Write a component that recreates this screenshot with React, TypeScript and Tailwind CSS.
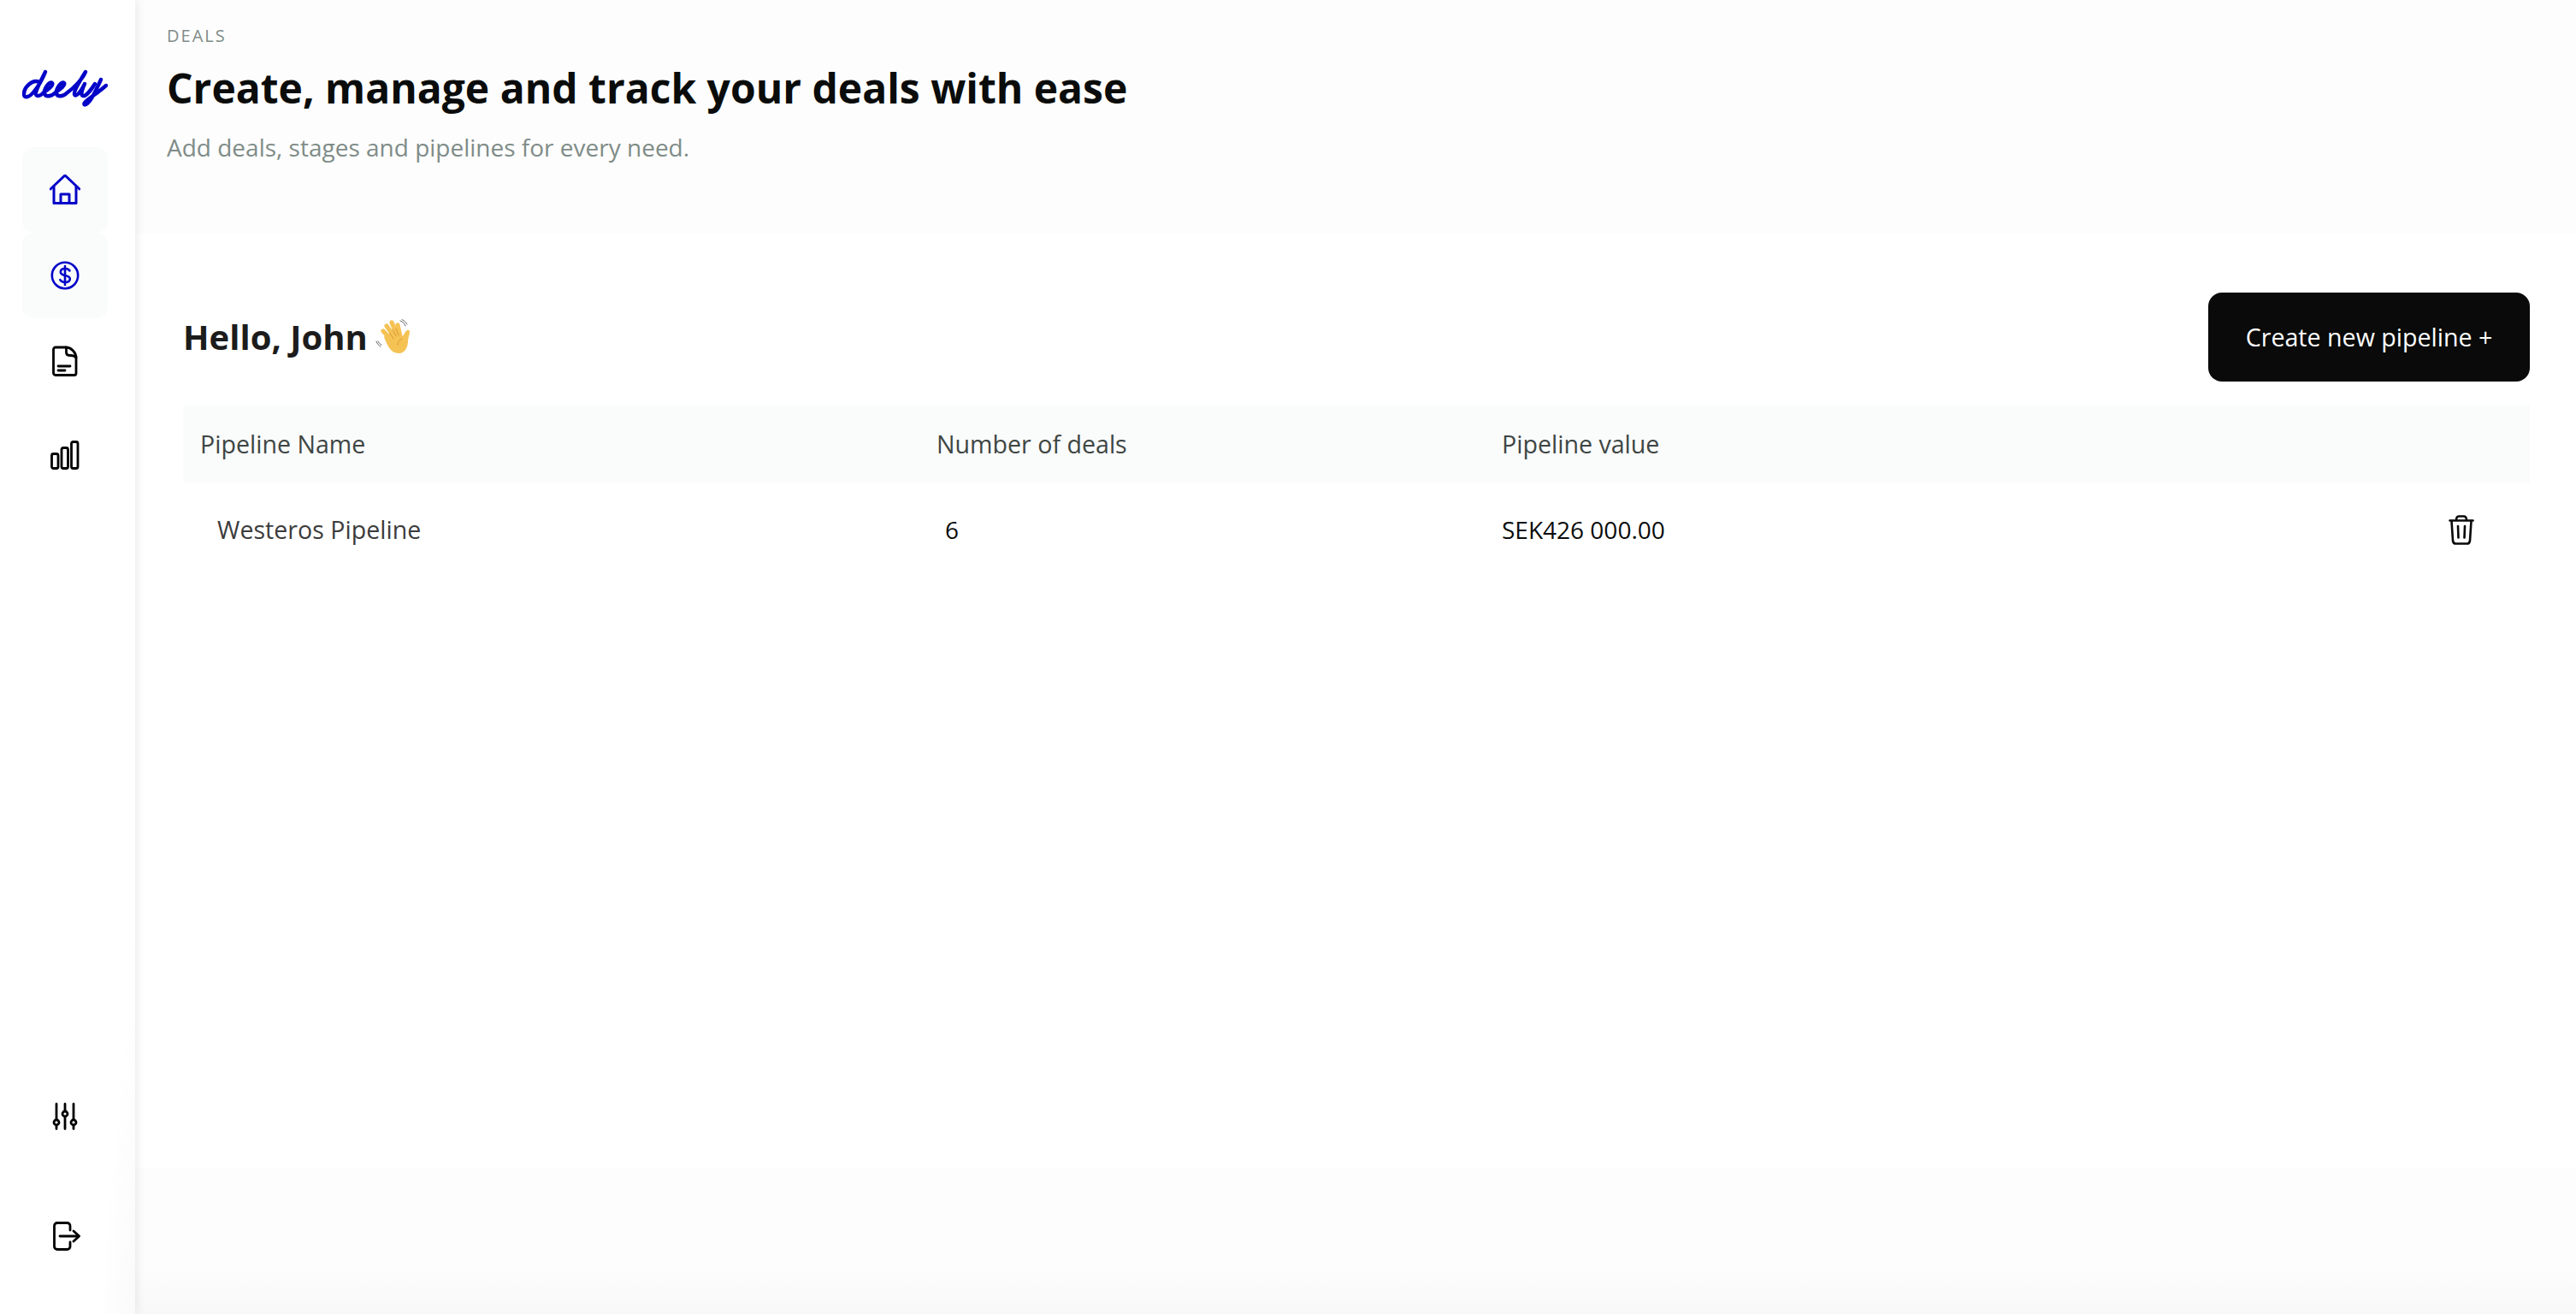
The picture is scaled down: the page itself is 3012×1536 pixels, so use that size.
const BLUE = "#0404c8";

function Logo() {
  return (
    <svg width="100" height="46" viewBox="26 80 100 46" fill="none" stroke={BLUE} strokeWidth="4.400" strokeLinecap="round" strokeLinejoin="round">
      <path d="M46 96C38 92 28 102 28 110C28 116 35 113 39 108C44 102 50 92 53 84C49 92 43 103 42 108C41 114 47 113 51 108C56 105 63 100 61 97C58 94 51 104 52 109C53 114 60 113 65 108C69 105 77 100 75 97C72 94 65 104 66 109C67 114 74 113 79 108C86 103 97 92 100 84C95 92 86 106 87 110C88 114 93 110 99 98C96 104 94 111 97 112C100 113 106 106 111 98" />
      <path d="M118 93C113 104 108 115 104 119C100 124 97 123 99 120C102 116 112 110 118 105L124 100" />
    </svg>
  );
}

function HomeIcon() {
  return (
    <svg width="36" height="36" viewBox="0 0 36 36" fill="none" stroke={BLUE} strokeWidth="3" strokeLinecap="round" strokeLinejoin="round">
      <path d="M1 17L18 1L35 17" />
      <path d="M5 14V33.500H31V14" />
      <path d="M13 33.500V23H23V33.500" />
    </svg>
  );
}

function DollarIcon() {
  return (
    <svg width="34" height="34" viewBox="0 0 34 34" fill="none" stroke={BLUE} strokeWidth="2.600" strokeLinecap="round" strokeLinejoin="round">
      <circle cx="17" cy="17" r="15.200" />
      <path d="M22.500 11.500C21.500 9.800 19.500 9 17 9C13.800 9 11.800 10.600 11.800 13C11.800 18.500 22.800 15.500 22.800 21C22.800 23.500 20.500 25 17 25C14.300 25 12.300 24 11.300 22.200" />
      <path d="M17 6V28" />
    </svg>
  );
}

function FileIcon() {
  return (
    <svg width="30" height="36" viewBox="0 0 30 36" fill="none" stroke="#000" strokeWidth="2.800" strokeLinecap="round" strokeLinejoin="round">
      <path d="M4 2H16C22 2 28 8 28 14V32C28 33.500 27 34.500 26 34.500H4C2.500 34.500 1.500 33.500 1.500 32V4.500C1.500 3 2.500 2 4 2Z" />
      <path d="M16 2C17 4 16.500 6 16.500 8C16.500 10.500 18 11.500 20.500 11.500C23 11.500 25.500 11 28 14" />
      <path d="M7 24H21" />
      <path d="M7 29H15" />
    </svg>
  );
}

function BarsIcon() {
  return (
    <svg width="34" height="34" viewBox="0 0 34 34" fill="none" stroke="#000" strokeWidth="2.800">
      <rect x="1.500" y="15.500" width="7.500" height="17" rx="2" />
      <rect x="13" y="8.500" width="7.500" height="24" rx="2" />
      <rect x="24.500" y="1.500" width="7.500" height="31" rx="2" />
    </svg>
  );
}

function SlidersIcon() {
  return (
    <svg width="30" height="32" viewBox="0 0 30 32" fill="none" stroke="#000" strokeWidth="2.800" strokeLinecap="round">
      <path d="M5 1.500V20M5 26V30.500" />
      <path d="M15 1.500V10M15 16V30.500" />
      <path d="M25 1.500V20M25 26V30.500" />
      <circle cx="5" cy="23" r="3" fill="#fff" />
      <circle cx="15" cy="13" r="3" fill="#fff" />
      <circle cx="25" cy="23" r="3" fill="#fff" />
    </svg>
  );
}

function LogoutIcon() {
  return (
    <svg width="32" height="34" viewBox="0 0 32 34" fill="none" stroke="#000" strokeWidth="2.800" strokeLinecap="round" strokeLinejoin="round" className="ml-[3px]">
      <path d="M20 10V5C20 3 18.500 1.500 16.500 1.500H5C3 1.500 1.500 3 1.500 5V29C1.500 31 3 32.500 5 32.500H16.500C18.500 32.500 20 31 20 29V24" />
      <path d="M8 17H30" />
      <path d="M24 11L30.500 17L24 23" />
    </svg>
  );
}

function TrashIcon() {
  return (
    <svg width="30" height="35" viewBox="0 0 30 35" fill="none" stroke="#0a0a0a" strokeWidth="2.600" strokeLinecap="round" strokeLinejoin="round">
      <path d="M1.500 6.500H28.500" />
      <path d="M9 6C9 2.500 10.500 1.500 12.500 1.500H17.500C19.500 1.500 21 2.500 21 6" />
      <path d="M3.500 7L5 30C5.200 32 6.500 33.500 8.500 33.500H21.500C23.500 33.500 24.800 32 25 30L26.500 7" />
      <path d="M11 13L11.500 26.500" />
      <path d="M19 13L18.500 26.500" />
    </svg>
  );
}

function WaveEmoji() {
  return (
    <svg width="42" height="42" viewBox="0 0 42 42" fill="none">
      <g stroke="#f5c254" strokeWidth="5.200" strokeLinecap="round">
        <path d="M20 26L9 14" />
        <path d="M23 22L13 8" />
        <path d="M26 20L19 4" />
        <path d="M29 20L26 7" />
      </g>
      <path d="M10 21C14 31 18 40 27 40C35 40 38 32 38 26C38 22 40 18 40 15C40 12 37 12 35 15L32 20L24 16L12 18Z" fill="#f5c254" />
      <g stroke="#d99c36" strokeWidth="1" strokeLinecap="round">
        <path d="M16.500 16L21 23" />
        <path d="M20 12L24 20" />
        <path d="M24 11L27 19" />
        <path d="M31 23C28 24 26 27 26 30" />
      </g>
      <g stroke="#555" strokeWidth="0.900" strokeLinecap="round">
        <path d="M29 2C32 3 34 5 35 8" />
        <path d="M31 0.500C34 2 36 4 37 6" />
        <path d="M1 26C2 29 4 31 6 32" />
        <path d="M3 26C4 28 5 29 7 30" />
      </g>
    </svg>
  );
}

function NavItem({ active, last, children }: { active?: boolean; last?: boolean; children: React.ReactNode }) {
  return (
    <div className={`w-[100px] h-[100px] flex items-center justify-center rounded-[14px] ${active ? "bg-[#fafbfb]" : ""} ${last ? "mt-[10px]" : ""}`}>
      {children}
    </div>
  );
}

export default function App() {
  return (
    <div className="flex w-[3012px] h-[1536px] overflow-hidden bg-white text-[#0a0c0b] font-['Open_Sans',sans-serif]">
      <aside className="relative z-10 w-[158px] shrink-0 flex flex-col items-center pr-[6px] bg-gradient-to-br from-white via-white via-85% to-[#fafafa] shadow-[3px_0_10px_rgba(0,0,0,0.07)]">
        <div className="mt-[80px] h-[92px]">
          <Logo />
        </div>
        <NavItem active><HomeIcon /></NavItem>
        <NavItem active><DollarIcon /></NavItem>
        <NavItem><FileIcon /></NavItem>
        <NavItem last><BarsIcon /></NavItem>
        <div className="mt-auto flex flex-col items-center gap-[107px] mb-[74px]">
          <SlidersIcon />
          <LogoutIcon />
        </div>
      </aside>

      <main className="flex-1 flex flex-col min-w-0">
        <header className="h-[273px] shrink-0 bg-[#fdfdfd] pl-[37px] pt-[30px]">
          <p className="text-[20px] leading-[24px] font-medium tracking-[0.1em] text-[#7f8c88]">DEALS</p>
          <h1 className="mt-[17px] text-[48px] leading-[64px] font-bold">Create, manage and track your deals with ease</h1>
          <p className="mt-[17px] text-[28px] leading-[40px] text-[#7f8c88]">Add deals, stages and pipelines for every need.</p>
        </header>

        <section className="flex-1 bg-white pl-[56px] pr-[54px] pt-[69px]">
          <div className="flex items-center justify-between h-[104px] mb-[28px]">
            <div className="flex items-center gap-[9px]">
              <h2 className="text-[40px] leading-[56px] font-bold text-[#1c1c1c]">Hello, John</h2>
              <WaveEmoji />
            </div>
            <button className="w-[376px] h-[104px] rounded-[16px] bg-[#090a09] text-white text-[28.6px]">Create new pipeline +</button>
          </div>

          <div className="grid grid-cols-[881px_661px_1fr] items-center h-[90px] bg-[#fafbfb] pl-[20px] text-[28.6px] text-[#3e4644]">
            <span>Pipeline Name</span>
            <span className="-ml-[20px]">Number of deals</span>
            <span className="-ml-[20px]">Pipeline value</span>
          </div>
          <div className="grid grid-cols-[881px_661px_1fr] items-center h-[110px] pl-[40px] pr-[65px] text-[28px]">
            <span className="text-[#3c3c3c] text-[28.6px]">Westeros Pipeline</span>
            <span className="-ml-[30px]">6</span>
            <div className="-ml-[40px] flex items-center justify-between">
              <span>SEK426 000.00</span>
              <button><TrashIcon /></button>
            </div>
          </div>
        </section>

        <footer className="h-[171px] shrink-0 bg-gradient-to-b from-[#fdfdfd] via-[#fdfdfd] via-65% to-[#f8f8f8]" />
      </main>
    </div>
  );
}
